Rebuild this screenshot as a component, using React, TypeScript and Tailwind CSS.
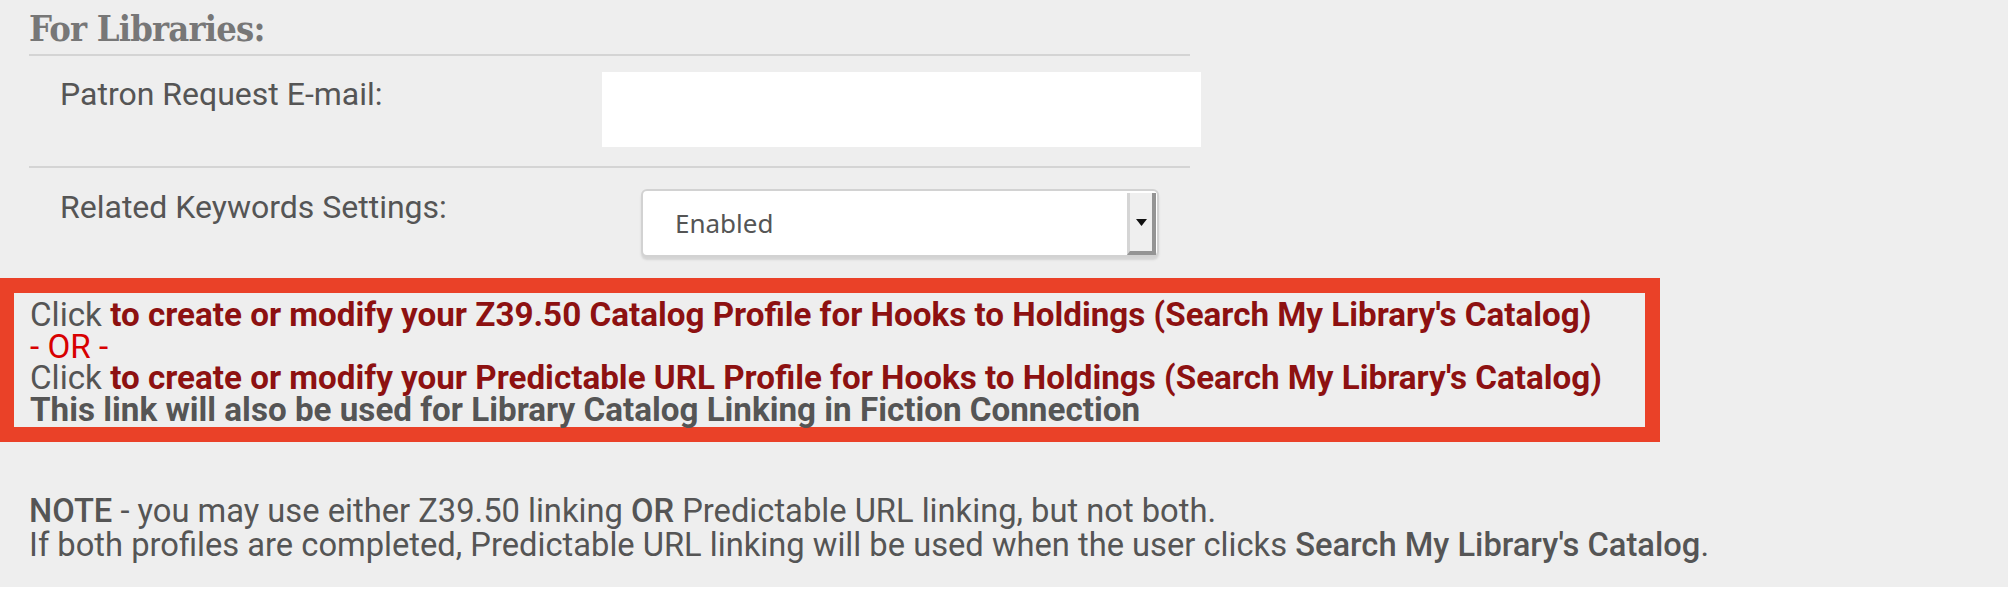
export default function App() {
  return (
    <div className="min-h-[594px] w-[2008px] bg-white">
      <div className="h-[587px] w-[2008px] overflow-hidden bg-[#eeeeee] font-['Roboto',sans-serif] text-[#555555]">
        <div className="ml-[29px] w-[1161px]">
          <h2 className="h-[54px] font-['DejaVu_Serif',serif] text-[36px] font-bold leading-[56px] tracking-[-0.8px] text-[#777777] [font-stretch:condensed]">
            For Libraries:
          </h2>

          <div className="flex h-[112px] border-t-2 border-[#d4d4d4]">
            <div className="ml-[31px] mt-[22px] w-[542px] shrink-0 text-[32px] leading-[32px]">
              Patron Request E-mail:
            </div>
            <div className="mt-[16px] h-[75px] w-[599px] shrink-0 bg-white" />
          </div>

          <div className="flex h-[112px] border-t-2 border-[#d4d4d4]">
            <div className="ml-[31px] mt-[23px] w-[581px] shrink-0 text-[32px] leading-[32px]">
              Related Keywords Settings:
            </div>
            <div className="mt-[21px] flex h-[68px] w-[518px] shrink-0 rounded-[6px] border-2 border-[#d2d2d2] bg-white shadow-[0_3px_2px_#d4d4d4]">
              <div className="flex flex-1 items-center pl-[32px] font-['Noto_Sans',sans-serif] text-[26px]">
                Enabled
              </div>
              <div className="mr-[1px] mt-[2px] flex w-[29px] items-center justify-center border-b-[4px] border-l-[3px] border-r-[4px] border-b-[#949494] border-l-[#d5d5d5] border-r-[#949494] bg-[#efefef]">
                <svg width="11" height="7" viewBox="0 0 11 7">
                  <polygon points="0,0 11,0 5.5,7" fill="#111111" />
                </svg>
              </div>
            </div>
          </div>
        </div>

        <div className="h-[164px] w-[1660px] border-y-[15px] border-l-[14px] border-r-[15px] border-[#ea4128] pl-[16px] pt-[6px] text-[33.2px] leading-[31.5px]">
          <div>
            Click{" "}
            <span className="font-bold text-[#8d1111]">
              to create or modify your Z39.50 Catalog Profile for Hooks to Holdings (Search My Library's Catalog)
            </span>
          </div>
          <div className="text-[#d80000]">- OR -</div>
          <div>
            Click{" "}
            <span className="font-bold text-[#8d1111]">
              to create or modify your Predictable URL Profile for Hooks to Holdings (Search My Library's Catalog)
            </span>
          </div>
          <div className="font-bold">This link will also be used for Library Catalog Linking in Fiction Connection</div>
        </div>

        <div className="ml-[29px] mt-[52px] text-[32.7px] leading-[34px]">
          <div>
            <span className="font-medium">NOTE</span> - you may use either Z39.50 linking{" "}
            <span className="font-medium">OR</span> Predictable URL linking, but not both.
          </div>
          <div>
            If both profiles are completed, Predictable URL linking will be used when the user clicks{" "}
            <span className="font-medium">Search My Library's Catalog</span>.
          </div>
        </div>
      </div>
    </div>
  );
}
